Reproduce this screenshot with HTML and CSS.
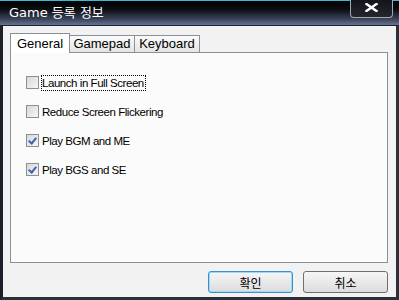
FILE: index.html
```html
<!DOCTYPE html>
<html lang="ko">
<head>
  <meta charset="UTF-8">
  <title>Game 등록 정보</title>
  <link rel="stylesheet" href="styles.css">
</head>
<body>
  <div class="window">
    <div class="titlebar">
      <span class="title">Game 등록 정보</span>
      <button class="close" aria-label="닫기">
        <svg width="13" height="9" viewBox="0 0 13 9"><path d="M1.5 1 L11.5 8 M11.5 1 L1.5 8" stroke="#fff" stroke-width="2.4" stroke-linecap="square"/></svg>
      </button>
    </div>
    <div class="client">
      <div class="tabs">
        <div class="tab active">General</div>
        <div class="tab">Gamepad</div>
        <div class="tab">Keyboard</div>
      </div>
      <div class="panel">
        <label class="check"><span class="box"></span><span class="text focus">Launch in Full Screen</span></label>
        <label class="check"><span class="box"></span><span class="text">Reduce Screen Flickering</span></label>
        <label class="check"><span class="box checked"></span><span class="text">Play BGM and ME</span></label>
        <label class="check"><span class="box checked"></span><span class="text">Play BGS and SE</span></label>
      </div>
      <div class="actions">
        <button class="btn default">확인</button>
        <button class="btn">취소</button>
      </div>
    </div>
  </div>
</body>
</html>
```

FILE: styles.css
```css
:root {
  --frame: #2b2f3a;
  --client: #f2f2f2;
  --line: #8a9099;
}
* { box-sizing: border-box; }
body {
  margin: 0;
  width: 399px;
  height: 300px;
  background: var(--frame);
  font-family: "Liberation Sans", "Noto Sans CJK KR", sans-serif;
  overflow: hidden;
}
.window {
  display: flex;
  flex-direction: column;
  height: 300px;
  border: 3px solid var(--frame);
  border-top: 0;
  border-left-color: #1c1f27;
}
.titlebar {
  display: flex;
  height: 26px;
  margin: 0 -3px;
  padding-left: 9px;
  background: linear-gradient(#020204 0%, #0c0d12 35%, #3a4259 75%, #67738f 100%);
  border-top: 1px solid #38bdd0;
  border-bottom: 1px solid #1c2030;
}
.title {
  color: #fff;
  font-family: "DejaVu Sans", "Noto Sans CJK KR", sans-serif;
  font-size: 13px;
  line-height: 24px;
}
.close {
  margin: -1px 6px 0 auto;
  width: 43px;
  height: 18px;
  padding: 0 0 2px;
  background: linear-gradient(#14151b, #23252f);
  border: 1px solid #a3a7b3;
  border-top: 0;
  border-radius: 0 0 4px 4px;
  display: flex;
  align-items: center;
  justify-content: center;
}
.client {
  flex: 1;
  display: flex;
  flex-direction: column;
  background: var(--client);
  padding: 7px 8px 4px 7px;
}
.tabs {
  display: flex;
  align-items: flex-end;
  height: 20px;
  margin-bottom: -1px;
  font-size: 13px;
}
.tab {
  height: 17px;
  margin-bottom: 1px;
  margin-left: -1px;
  border: 1px solid var(--line);
  border-bottom: 0;
  background: linear-gradient(#fbfbfb, #e4e4e4);
  color: #000;
  line-height: 16px;
  text-align: center;
  width: 67px;
}
.tab + .tab { width: 66px; }
.tab.active {
  position: relative;
  z-index: 1;
  margin-left: 0;
  width: 60px;
  height: 20px;
  margin-bottom: 0;
  background: #fff;
  line-height: 20px;
}
.panel {
  flex: 1;
  display: flex;
  flex-direction: column;
  gap: 14px;
  padding: 22px 0 0 15px;
  background: #fbfbfb;
  border: 1px solid var(--line);
}
.check {
  display: flex;
  align-items: center;
  gap: 2px;
  height: 15px;
  font-size: 11.5px;
  letter-spacing: -0.45px;
  color: #000;
}
.box {
  width: 13px;
  height: 13px;
  border: 1px solid #8c9096;
  background: linear-gradient(135deg, #d8d8d4, #f6f6f4);
  position: relative;
}
.box.checked::after {
  content: "";
  position: absolute;
  left: 3px;
  top: 1px;
  width: 3px;
  height: 6px;
  border: solid #3d5fb8;
  border-width: 0 2px 2px 0;
  transform: rotate(40deg);
}
.text {
  padding: 1px 1px 1px 0;
  border: 1px solid transparent;
  line-height: 12px;
}
.text.focus { border: 1px dotted #000; }
.actions {
  display: flex;
  justify-content: flex-end;
  gap: 10px;
  margin-top: 8px;
  height: 22px;
}
.btn {
  width: 85px;
  height: 22px;
  padding: 0;
  font-family: "Noto Sans CJK KR", sans-serif;
  font-size: 12px;
  color: #000;
  background: linear-gradient(#f6f6f6, #dcdcdc);
  border: 1px solid #707070;
  border-radius: 3px;
}
.btn.default {
  border-color: #3c8fcf;
  box-shadow: inset 0 0 0 1px #9ed8f3;
}
```
